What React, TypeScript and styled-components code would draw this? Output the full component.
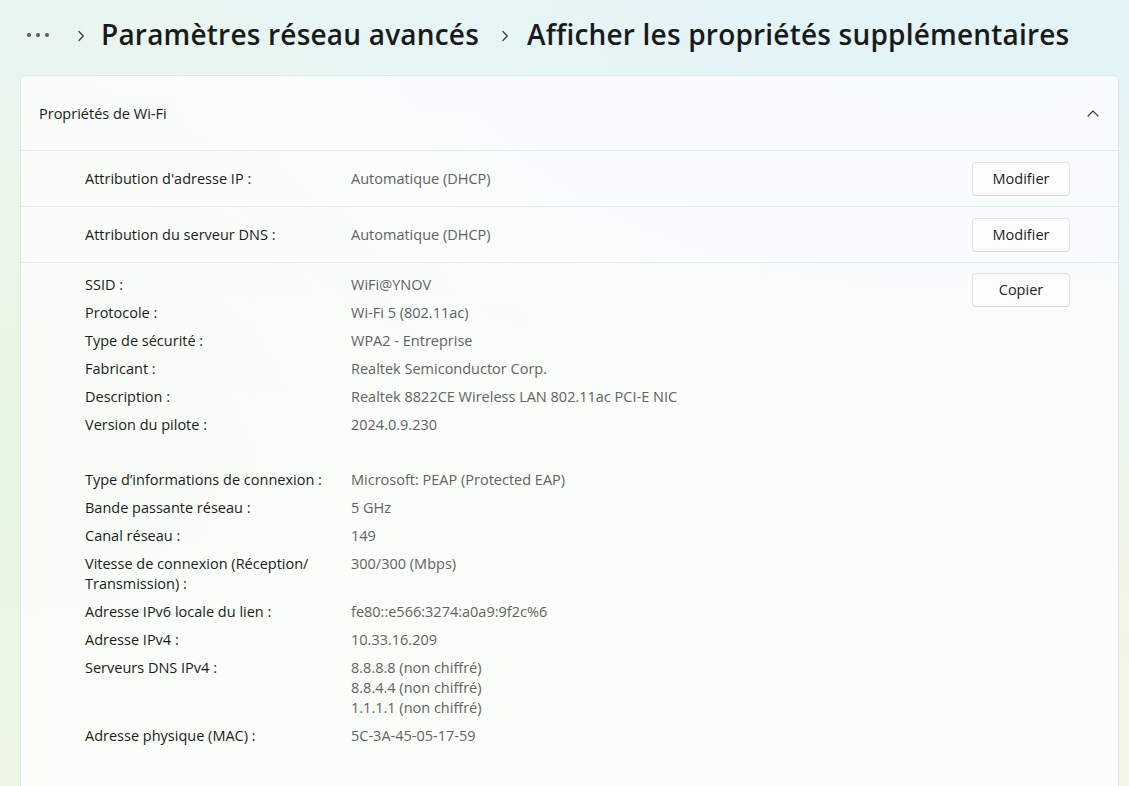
import React from "react";
import styled, { createGlobalStyle } from "styled-components";

const Global = createGlobalStyle`
  html, body { margin: 0; padding: 0; }
  body {
    font-family: "Open Sans", "Noto Sans", sans-serif;
    width: 1129px;
    height: 786px;
    overflow: hidden;
    background:
      radial-gradient(ellipse 900px 500px at 85% 0%, #e2f4f8 0%, rgba(226,244,248,0) 100%),
      radial-gradient(ellipse 700px 600px at 0% 60%, #e8f6e4 0%, rgba(232,246,228,0) 100%),
      linear-gradient(180deg, #e9f5f3 0%, #eef6ea 60%, #f3f6e6 100%);
  }
`;

const Page = styled.div`
  display: flex;
  flex-direction: column;
  padding: 0 10px 0 20px;
  height: 786px;
  overflow: hidden;
  box-sizing: border-box;
`;

const Breadcrumb = styled.div`
  display: flex;
  align-items: center;
  height: 67px;
  flex-shrink: 0;
  color: #1a1a1a;
`;

const Dots = styled.span`
  display: flex;
  gap: 5px;
  margin: 0 0 0 7px;
  padding-top: 2px;
  & > i {
    width: 4px;
    height: 4px;
    border-radius: 50%;
    background: #5a5a5a;
    display: block;
  }
`;

const Sep = styled.span`
  display: flex;
  margin: 0 16px 0 28px;
  padding-top: 4px;
`;

const Sep2 = styled(Sep)`
  margin: 0 18px 0 22px;
`;

const Crumb = styled.span`
  font-size: 28px;
  font-weight: 600;
  letter-spacing: 0.2px;
  white-space: nowrap;
`;

const Card = styled.div`
  margin-top: 8px;
  border: 1px solid #e1e7e8;
  border-radius: 6px;
  background: rgba(255, 255, 255, 0.72);
  flex-shrink: 0;
  height: 760px;
  display: flex;
  flex-direction: column;
`;

const Header = styled.div`
  display: flex;
  align-items: center;
  justify-content: space-between;
  height: 74px;
  padding: 0 19px 0 18px;
  font-size: 14.5px;
  color: #1b1b1b;
`;

const Row = styled.div`
  display: grid;
  grid-template-columns: 266px 1fr auto;
  align-items: center;
  height: 55px;
  border-top: 1px solid #e3ebec;
  padding: 0 48px 0 64px;
  font-size: 14.5px;
`;

const Label = styled.div`
  color: #1b1b1b;
  line-height: 20px;
`;

const Value = styled.div`
  color: #626262;
  line-height: 20px;
`;

const Button = styled.button`
  width: 98px;
  height: 34px;
  border: 1px solid #e3e3e3;
  border-bottom-color: #d4d4d4;
  border-radius: 4px;
  background: #fdfdfd;
  font-family: inherit;
  font-size: 14.5px;
  color: #1b1b1b;
  padding: 0 0 1px;
`;

const CopyButton = styled(Button)`
  margin-top: -2px;
`;

const Details = styled.div`
  border-top: 1px solid #e3ebec;
  display: grid;
  grid-template-columns: 1fr auto;
  align-items: start;
  padding: 12px 48px 0 64px;
  font-size: 14.5px;
`;

const DetailGroups = styled.div`
  display: flex;
  flex-direction: column;
  gap: 35px;
`;

const DetailList = styled.div`
  display: flex;
  flex-direction: column;
  gap: 8px;
`;

const DetailRow = styled.div`
  display: grid;
  grid-template-columns: 266px 1fr;
`;

const MultiValue = styled(Value)`
  display: flex;
  flex-direction: column;
`;

const ChevronRight = () => (
  <svg width="8" height="12" viewBox="0 0 8 12" fill="none">
    <path d="M2 1.5 L6.2 6 L2 10.5" stroke="#3a3a3a" strokeWidth="1.3" strokeLinecap="round" strokeLinejoin="round" />
  </svg>
);

const ChevronUp = () => (
  <svg width="12" height="7" viewBox="0 0 12 7" fill="none">
    <path d="M1 6 L6 1 L11 6" stroke="#3a3a3a" strokeWidth="1.1" strokeLinecap="round" strokeLinejoin="round" />
  </svg>
);

type Item = { label: React.ReactNode; value: React.ReactNode | string[] };

const group1: Item[] = [
  { label: "SSID :", value: "WiFi@YNOV" },
  { label: "Protocole :", value: "Wi-Fi 5 (802.11ac)" },
  { label: "Type de sécurité :", value: "WPA2 - Entreprise" },
  { label: "Fabricant :", value: "Realtek Semiconductor Corp." },
  { label: "Description :", value: "Realtek 8822CE Wireless LAN 802.11ac PCI-E NIC" },
  { label: "Version du pilote :", value: "2024.0.9.230" },
];

const group2: Item[] = [
  { label: "Type d’informations de connexion :", value: "Microsoft: PEAP (Protected EAP)" },
  { label: "Bande passante réseau :", value: "5 GHz" },
  { label: "Canal réseau :", value: "149" },
  {
    label: (
      <>
        Vitesse de connexion (Réception/
        <br />
        Transmission) :
      </>
    ),
    value: "300/300 (Mbps)",
  },
  { label: "Adresse IPv6 locale du lien :", value: "fe80::e566:3274:a0a9:9f2c%6" },
  { label: "Adresse IPv4 :", value: "10.33.16.209" },
  {
    label: "Serveurs DNS IPv4 :",
    value: ["8.8.8.8 (non chiffré)", "8.8.4.4 (non chiffré)", "1.1.1.1 (non chiffré)"],
  },
  { label: "Adresse physique (MAC) :", value: "5C-3A-45-05-17-59" },
];

const renderItems = (items: Item[]) =>
  items.map((it, i) => (
    <DetailRow key={i}>
      <Label>{it.label}</Label>
      {Array.isArray(it.value) ? (
        <MultiValue>
          {it.value.map((v) => (
            <span key={v}>{v}</span>
          ))}
        </MultiValue>
      ) : (
        <Value>{it.value}</Value>
      )}
    </DetailRow>
  ));

export default function App() {
  return (
    <>
      <Global />
      <Page>
        <Breadcrumb>
          <Dots>
            <i />
            <i />
            <i />
          </Dots>
          <Sep>
            <ChevronRight />
          </Sep>
          <Crumb>Paramètres réseau avancés</Crumb>
          <Sep2>
            <ChevronRight />
          </Sep2>
          <Crumb>Afficher les propriétés supplémentaires</Crumb>
        </Breadcrumb>
        <Card>
          <Header>
            <span>Propriétés de Wi-Fi</span>
            <ChevronUp />
          </Header>
          <Row>
            <Label>Attribution d'adresse IP :</Label>
            <Value>Automatique (DHCP)</Value>
            <Button>Modifier</Button>
          </Row>
          <Row>
            <Label>Attribution du serveur DNS :</Label>
            <Value>Automatique (DHCP)</Value>
            <Button>Modifier</Button>
          </Row>
          <Details>
            <DetailGroups>
              <DetailList>{renderItems(group1)}</DetailList>
              <DetailList>{renderItems(group2)}</DetailList>
            </DetailGroups>
            <CopyButton>Copier</CopyButton>
          </Details>
        </Card>
      </Page>
    </>
  );
}
